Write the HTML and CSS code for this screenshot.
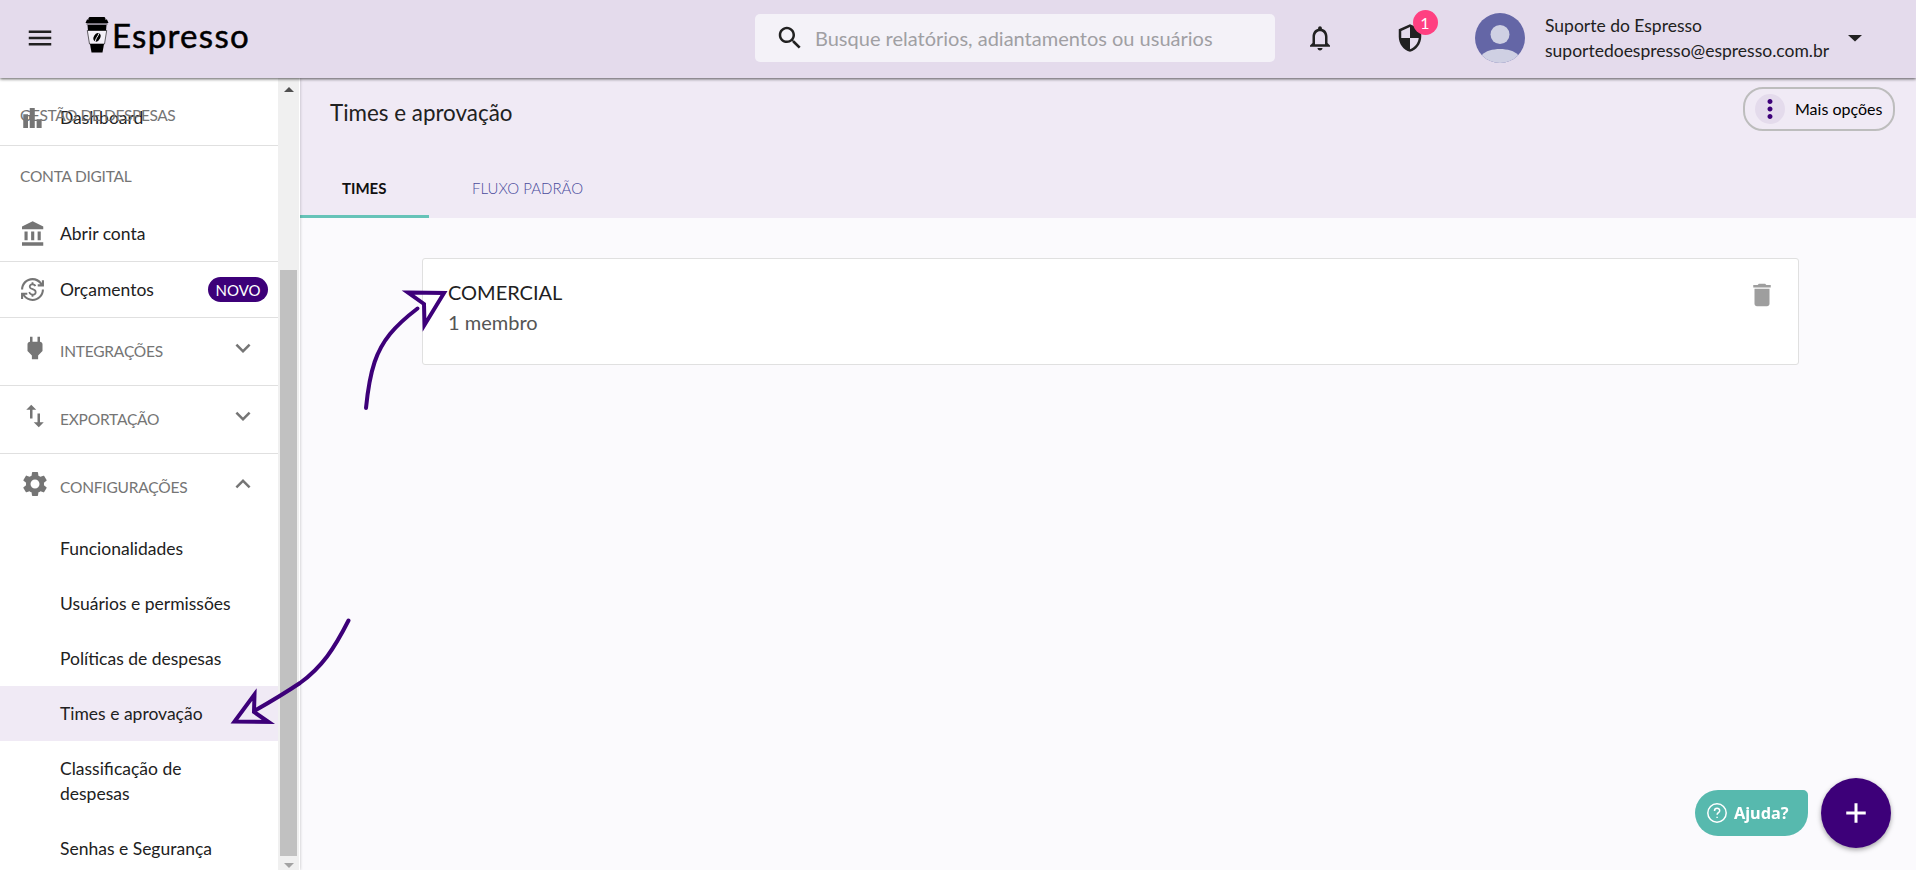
FILE: index.html
```
<!DOCTYPE html>
<html lang="pt-BR">
<head>
  <meta charset="UTF-8" />
  <meta name="viewport" content="width=device-width, initial-scale=1.0"/>
  <title>Times e aprovação | Espresso</title>
  <link rel="stylesheet" href="styles.css">
</head>
<body>

  <header class="topbar">
    <svg class="icon menu-icon" viewBox="0 0 24 24"><path d="M3 18h18v-2H3v2zm0-5h18v-2H3v2zm0-7v2h18V6H3z"/></svg>
    <div class="logo">
      <svg class="logo-cup" viewBox="0 0 24 36">
        <path d="M4.500 0h15l1 1.200-.5 1.300h2l1.500 3.500H.5L2 2.500h1.700l-.4-1.300z"/>
        <path class="cup-band" d="M1.500 6h21v1.800h-21z"/>
        <path d="M2.500 8h19l-.5 6H3z"/>
        <path class="cup-sleeve" d="M2.300 13.500h19.400L19.500 27h-15z"/>
        <ellipse cx="12" cy="20.300" rx="3.200" ry="4.500" transform="rotate(28 12 20.300)"/>
        <path class="bean-line" d="M13.800 16.500c-.6 3-3 4-3.500 8"/>
        <path d="M5 27h14l-1.500 8.500H6.500z"/>
      </svg>
      <span class="logo-text">Espresso</span>
    </div>

    <div class="search">
      <svg class="icon" viewBox="0 0 24 24"><path d="M15.500 14h-.79l-.28-.27C15.410 12.590 16 11.110 16 9.500 16 5.910 13.090 3 9.500 3S3 5.910 3 9.500 5.910 16 9.500 16c1.610 0 3.090-.59 4.230-1.570l.27.28v.79l5 4.990L20.490 19l-4.990-5zm-6 0C7.010 14 5 11.990 5 9.500S7.010 5 9.500 5 14 7.010 14 9.500 11.990 14 9.500 14z"/></svg>
      <span>Busque relatórios, adiantamentos ou usuários</span>
    </div>

    <svg class="icon bell" viewBox="0 0 24 24"><path d="M12 22c1.100 0 2-.9 2-2h-4c0 1.100.9 2 2 2zm6-6v-5c0-3.070-1.630-5.640-4.500-6.320V4c0-.83-.67-1.500-1.500-1.500s-1.500.67-1.500 1.500v.68C7.640 5.360 6 7.920 6 11v5l-2 2v1h16v-1l-2-2zm-2 1H8v-6c0-2.480 1.510-4.500 4-4.500s4 2.020 4 4.500v6z"/></svg>
    <div class="shield">
      <svg class="icon" viewBox="0 0 24 24"><path d="M12 1L3 5v6c0 5.550 3.840 10.740 9 12 5.160-1.260 9-6.450 9-12V5l-9-4zm0 10.990h7c-.53 4.120-3.280 7.790-7 8.940V12H5V6.300l7-3.110v8.800z"/></svg>
      <span class="count">1</span>
    </div>

    <div class="user">
      <svg class="avatar" viewBox="0 0 50 50">
        <clipPath id="round"><circle cx="25" cy="25" r="25"/></clipPath>
        <g clip-path="url(#round)">
          <rect class="avatar-bg" width="50" height="50"/>
          <circle class="avatar-fg" cx="25" cy="21.500" r="9.500"/>
          <path class="avatar-fg" d="M7 42c3-4 11-6 18-6s15 2 18 6v8H7z"/>
        </g>
      </svg>
      <div class="user-text">
        <div>Suporte do Espresso</div>
        <div>suportedoespresso@espresso.com.br</div>
      </div>
      <svg class="icon" viewBox="0 0 24 24"><path d="M6.400 9.600l5.600 5.200 5.600-5.200z"/></svg>
    </div>
  </header>

  <div class="layout">
    <aside class="sidebar">
      <nav>
        <div class="row dashboard">
          <svg class="icon" viewBox="0 0 24 24"><path d="M5 9h3.800v11H5zM15.700 13h4v7h-4zM10.200 4h4v16h-4z"/></svg>
          <span>Dashboard</span>
          <span class="section-over">GESTÃO DE DESPESAS</span>
        </div>
        <div class="section">CONTA DIGITAL</div>
        <div class="row">
          <svg class="icon" viewBox="0 0 24 24"><path d="M8.500 10H6v7h2.500v-7zm5.300 0h-2.500v7h2.500v-7zM21 18.600H4v2.800h17v-2.800zM19 10h-2.500v7H19v-7zm-6.500-8.300L4 6v2.200h17V6l-8.500-4.300z"/></svg>
          <span>Abrir conta</span>
        </div>
        <div class="row">
          <svg class="icon budget-icon" viewBox="0 0 24 24"><path d="M12.890 11.100c-1.780-.59-2.640-.96-2.640-1.900 0-1.020 1.110-1.390 1.810-1.390 1.310 0 1.790.99 1.900 1.340l1.580-.67c-.15-.44-.82-1.910-2.660-2.230V5h-1.750v1.260c-2.600.56-2.620 2.850-2.620 2.960 0 2.270 2.250 2.910 3.350 3.310 1.580.56 2.280 1.070 2.280 2.030 0 1.130-1.050 1.610-1.980 1.610-1.820 0-2.340-1.870-2.400-2.090l-1.660.67c.63 2.190 2.280 2.780 3.020 2.960V19h1.750v-1.240c.52-.09 3.020-.59 3.020-3.220.01-1.390-.6-2.610-3-3.440zM3 21H1v-6h6v2H4.520c1.610 2.410 4.360 4 7.480 4 4.970 0 9-4.030 9-9h2c0 6.080-4.920 11-11 11-3.720 0-7.010-1.850-9-4.670V21zM1 12C1 5.920 5.920 1 12 1c3.720 0 7.010 1.850 9 4.670V3h2v6h-6V7h2.480C17.870 4.590 15.120 3 12 3c-4.970 0-9 4.030-9 9H1z"/></svg>
          <span>Orçamentos</span>
          <span class="new">NOVO</span>
        </div>
        <div class="group">
          <svg class="icon" viewBox="0 0 24 24"><path d="M16.010 7L16 3h-2v4h-4V3H8v4h-.01C7 6.990 6 7.990 6 8.990v5.490L9.500 18v3h5v-3l3.500-3.510v-5.500c0-1-1-2-1.990-1.990z"/></svg>
          <span>INTEGRAÇÕES</span>
          <svg class="icon chevron" viewBox="0 0 24 24"><path d="M16.590 8.590L12 13.170 7.410 8.590 6 10l6 6 6-6z"/></svg>
        </div>
        <div class="group">
          <svg class="icon" viewBox="0 0 24 24"><path d="M16 17.010V10h-2v7.010h-3L15 21l4-3.990h-3zM9 3L5 6.990h3V14h2V6.990h3L9 3z"/></svg>
          <span>EXPORTAÇÃO</span>
          <svg class="icon chevron" viewBox="0 0 24 24"><path d="M16.590 8.590L12 13.170 7.410 8.590 6 10l6 6 6-6z"/></svg>
        </div>
        <div class="group open">
          <svg class="icon" viewBox="0 0 24 24"><path d="M19.140 12.940c.04-.3.060-.61.060-.94 0-.32-.02-.64-.07-.94l2.030-1.580c.18-.14.23-.41.12-.61l-1.920-3.320c-.12-.22-.37-.29-.59-.22l-2.390.96c-.5-.38-1.030-.7-1.620-.94l-.36-2.540c-.04-.24-.24-.41-.48-.41h-3.840c-.24 0-.43.17-.47.41l-.36 2.540c-.59.24-1.130.57-1.620.94l-2.390-.96c-.22-.08-.47 0-.59.22L2.740 8.870c-.12.21-.08.47.12.61l2.030 1.580c-.05.3-.09.63-.09.94s.02.64.07.94l-2.030 1.580c-.18.14-.23.41-.12.61l1.920 3.320c.12.22.37.29.59.22l2.390-.96c.5.38 1.030.7 1.620.94l.36 2.540c.05.24.24.41.48.41h3.840c.24 0 .44-.17.47-.41l.36-2.540c.59-.24 1.130-.56 1.620-.94l2.390.96c.22.08.47 0 .59-.22l1.920-3.320c.12-.22.070-.47-.12-.61l-2.010-1.580zM12 15.600c-1.980 0-3.600-1.620-3.600-3.600s1.620-3.600 3.600-3.600 3.600 1.620 3.600 3.600-1.620 3.600-3.600 3.600z"/></svg>
          <span>CONFIGURAÇÕES</span>
          <svg class="icon chevron" viewBox="0 0 24 24"><path d="M12 8l-6 6 1.410 1.410L12 10.830l4.590 4.580L18 14z"/></svg>
        </div>
        <ul class="submenu">
          <li>Funcionalidades</li>
          <li>Usuários e permissões</li>
          <li>Políticas de despesas</li>
          <li class="active">Times e aprovação</li>
          <li>Classificação de despesas</li>
          <li>Senhas e Segurança</li>
        </ul>
      </nav>
      <div class="scrollbar">
        <span class="arrow-up"></span>
        <span class="thumb"></span>
        <span class="arrow-down"></span>
      </div>
    </aside>

    <main>
      <div class="page-head">
        <div class="title-row">
          <h1>Times e aprovação</h1>
          <button class="more">
            <span class="more-dots"><svg class="icon" viewBox="0 0 24 24"><path d="M12 8c1.100 0 2-.9 2-2s-.9-2-2-2-2 .9-2 2 .9 2 2 2zm0 2c-1.100 0-2 .9-2 2s.9 2 2 2 2-.9 2-2-.9-2-2-2zm0 6c-1.100 0-2 .9-2 2s.9 2 2 2 2-.9 2-2-.9-2-2-2z"/></svg></span>
            <span class="more-text">Mais opções</span>
          </button>
        </div>
        <div class="tabs">
          <div class="tab selected">TIMES</div>
          <div class="tab">FLUXO PADRÃO</div>
        </div>
      </div>

      <div class="card">
        <div>
          <div class="team">COMERCIAL</div>
          <div class="members">1 membro</div>
        </div>
        <svg class="icon trash" viewBox="0 0 24 24"><path d="M6 19c0 1.100.9 2 2 2h8c1.100 0 2-.9 2-2V7H6v12zM19 4h-3.500l-1-1h-5l-1 1H5v2h14V4z"/></svg>
      </div>
    </main>
  </div>

  <!-- Arrows over the page -->
  <svg class="arrows" viewBox="0 0 1916 870">
    <path class="line" d="M366 408C370 368 377 350 390 334C399 323 409 315 417.500 308.500"/>
    <path class="head" d="M408 292.500L444 293L424.500 325L424 304Z"/>
    <path class="line" d="M348.500 620.500C334 649 322 667 300 683C285 693 270 702 255 710.500"/>
    <path class="head" d="M254.500 694.500L234.500 721.500L268.500 722L254 712Z"/>
  </svg>

  <div class="floating">
    <button class="help">
      <svg viewBox="0 0 20 20"><circle cx="10" cy="10" r="9.200"/><path d="M7.500 8c0-3.600 5.200-3.400 5.200-.3 0 2-2.600 2-2.600 4.100"/><path d="M10.100 13.800v1.300"/></svg>
      <span>Ajuda?</span>
    </button>
    <button class="fab"><svg class="icon" viewBox="0 0 24 24"><path d="M19.800 13.200h-6.600v6.600h-2.400v-6.600H4.200v-2.400h6.600V4.200h2.400v6.600h6.600v2.400z"/></svg></button>
  </div>

</body>
</html>
```
FILE: styles.css
```
* {
  box-sizing: border-box;
}

body {
  margin: 0;
  height: 870px;
  overflow: hidden;
  font-family: Lato, sans-serif;
  font-size: 17.5px;
  color: #212121;
  background-color: #fbfafd;
}

button {
  font-family: inherit;
  border: none;
  padding: 0;
  cursor: pointer;
}

.icon {
  width: 30px;
  height: 30px;
  flex-shrink: 0;
  fill: currentColor;
}

/* Top bar */
.topbar {
  position: relative;
  z-index: 5;
  display: flex;
  align-items: center;
  height: 78px;
  padding: 0 46px 2px 25px;
  background-color: #e4dbec;
  box-shadow: 0 1px 3px rgba(0, 0, 0, 0.65);
}

.logo {
  display: flex;
  width: 180px;
  height: 44px;
  margin-left: 30px;
  color: #000;
}

.logo-cup {
  width: 24px;
  height: 36px;
  margin-top: 1px;
}

.cup-band {
  fill: #77717c;
}

.cup-sleeve {
  fill: #f4f0f8;
  stroke: #000;
  stroke-width: 0.6;
}

.bean-line {
  fill: none;
  stroke: #f4f0f8;
  stroke-width: 1;
}

.logo-text {
  margin-left: 3px;
  font-size: 33px;
  line-height: 38px;
  letter-spacing: 1.3px;
  -webkit-text-stroke: 0.5px #000;
}

.search {
  display: flex;
  align-items: center;
  width: 520px;
  height: 48px;
  margin-left: 490px;
  padding-left: 20px;
  border-radius: 5px;
  background-color: #f4f2f8;
}

.search span {
  margin-left: 10px;
  font-size: 20px;
  color: #a09fa3;
}

.bell {
  margin-left: 30px;
}

.shield {
  position: relative;
  height: 30px;
  margin-left: 60px;
}

.count {
  position: absolute;
  top: -13px;
  left: 17.5px;
  width: 25px;
  height: 25px;
  border-radius: 50%;
  background-color: #ff4081;
  color: #fff;
  font-size: 16px;
  line-height: 25px;
  text-align: center;
}

.user {
  display: flex;
  align-items: center;
  margin-left: 50px;
}

.avatar {
  width: 50px;
  height: 50px;
}

.avatar-bg {
  fill: #6466a6;
}

.avatar-fg {
  fill: #cfd0e3;
}

.user-text {
  width: 295px;
  margin-left: 20px;
  line-height: 25px;
}

/* Sidebar */
.layout {
  display: flex;
  height: 792px;
}

.sidebar {
  position: relative;
  z-index: 2;
  display: flex;
  width: 300px;
  flex-shrink: 0;
  background-color: #fff;
  box-shadow: 0 0 3px rgba(0, 0, 0, 0.25);
}

nav {
  width: 278px;
  height: 792px;
  overflow: hidden;
}

nav .icon {
  color: #757575;
}

.row {
  display: flex;
  align-items: center;
  height: 56px;
  padding: 0 10px 0 17px;
  border-bottom: 1px solid #e0e0e0;
}

.row .icon {
  margin-right: 13px;
}

.row .budget-icon {
  width: 25px;
  height: 25px;
  margin: 0 15px 0 3px;
}

.dashboard {
  position: relative;
  height: 68px;
  padding-top: 12px;
}

.section-over {
  position: absolute;
  top: 28px;
  left: 20px;
  font-size: 15.5px;
  letter-spacing: -0.4px;
  color: #757575;
}

.section {
  height: 60px;
  padding: 20px 20px 0;
  font-size: 15.5px;
  line-height: 20px;
  letter-spacing: -0.25px;
  color: #757575;
}

.new {
  width: 60px;
  height: 25px;
  margin-left: auto;
  border-radius: 13px;
  background-color: #3d0079;
  color: #fff;
  font-size: 15px;
  line-height: 26px;
  text-align: center;
}

.group {
  display: flex;
  height: 68px;
  padding: 15px 20px 0;
  border-bottom: 1px solid #e0e0e0;
  font-size: 15.5px;
  letter-spacing: -0.2px;
  color: #757575;
}

.group span {
  margin: 9px 0 0 10px;
}

.group .chevron {
  margin-left: auto;
}

.group.open {
  height: 67px;
  border-bottom: none;
}

.submenu {
  margin: 0;
  padding: 0;
  list-style: none;
}

.submenu li {
  padding: 15px 45px 15px 60px;
  line-height: 25px;
}

.submenu .active {
  background-color: #f0eaf5;
}

.scrollbar {
  display: flex;
  flex-direction: column;
  align-items: center;
  width: 21px;
  padding: 9px 0 2px;
  background-color: #f0f0f0;
}

.arrow-up {
  border: 5px solid transparent;
  border-top: none;
  border-bottom-color: #505050;
}

.thumb {
  width: 17px;
  height: 586px;
  margin-top: 178px;
  background-color: #c1c1c1;
}

.arrow-down {
  margin-top: 7px;
  border: 5px solid transparent;
  border-bottom: none;
  border-top-color: #a3a3a3;
}

/* Content */
main {
  flex: 1;
}

.page-head {
  height: 140px;
  background-color: #f0eaf5;
}

.title-row {
  display: flex;
  justify-content: space-between;
  height: 87px;
  padding: 9px 21px 0 30px;
}

h1 {
  margin: 10px 0 0;
  font-size: 22.4px;
  font-weight: normal;
  line-height: 32px;
}

.more {
  display: flex;
  align-items: center;
  width: 152px;
  height: 44px;
  padding-left: 10px;
  border: 2px solid #bdbdbd;
  border-radius: 20px;
  background: none;
  color: #000;
  font-size: 16px;
}

.more-dots {
  display: flex;
  margin-right: 10px;
  border-radius: 50%;
  background-color: #e4dbec;
  color: #3d0079;
}

.more-text {
  padding-bottom: 2px;
}

.tabs {
  display: flex;
  font-size: 15px;
}

.tab {
  height: 53px;
  padding: 12px 43px 0;
  line-height: 22px;
  font-weight: 300;
  color: #4a4c9c;
}

.tab.selected {
  width: 129px;
  padding-left: 42px;
  border-bottom: 3px solid #66c3b8;
  font-weight: bold;
  color: #111;
}

.card {
  display: flex;
  justify-content: space-between;
  height: 107px;
  margin: 40px 117px 0 122px;
  padding: 18px 21px 0 25px;
  border: 1px solid #e0e0e0;
  border-radius: 3px;
  background-color: #fff;
  font-size: 20px;
  line-height: 30px;
}

.members {
  color: #555;
}

.trash {
  margin-top: 3px;
  color: #9e9e9e;
}

.arrows {
  position: absolute;
  top: 0;
  left: 0;
  z-index: 6;
  width: 1916px;
  height: 870px;
  pointer-events: none;
}

.arrows path {
  fill: none;
  stroke: #3d0079;
  stroke-width: 4;
}

.arrows .line {
  stroke-linecap: round;
}

/* Floating buttons */
.floating {
  position: fixed;
  right: 25px;
  bottom: 22px;
  z-index: 4;
  display: flex;
  align-items: center;
  gap: 13px;
}

.help {
  display: flex;
  align-items: center;
  width: 113px;
  height: 46px;
  padding-left: 12px;
  border-radius: 23px 5px 23px 23px;
  background-color: #57b9ae;
  color: #fff;
  font-family: "Noto Sans", sans-serif;
  font-size: 16.3px;
  font-weight: bold;
}

.help span {
  padding-bottom: 1px;
}

.help svg {
  width: 20px;
  height: 20px;
  margin-right: 7px;
  fill: none;
  stroke: #fff;
  stroke-width: 1.5;
}

.fab {
  display: flex;
  align-items: center;
  justify-content: center;
  width: 70px;
  height: 70px;
  border-radius: 50%;
  background-color: #3d0079;
  color: #fff;
  box-shadow: 0 2px 5px rgba(0, 0, 0, 0.35);
}
```
